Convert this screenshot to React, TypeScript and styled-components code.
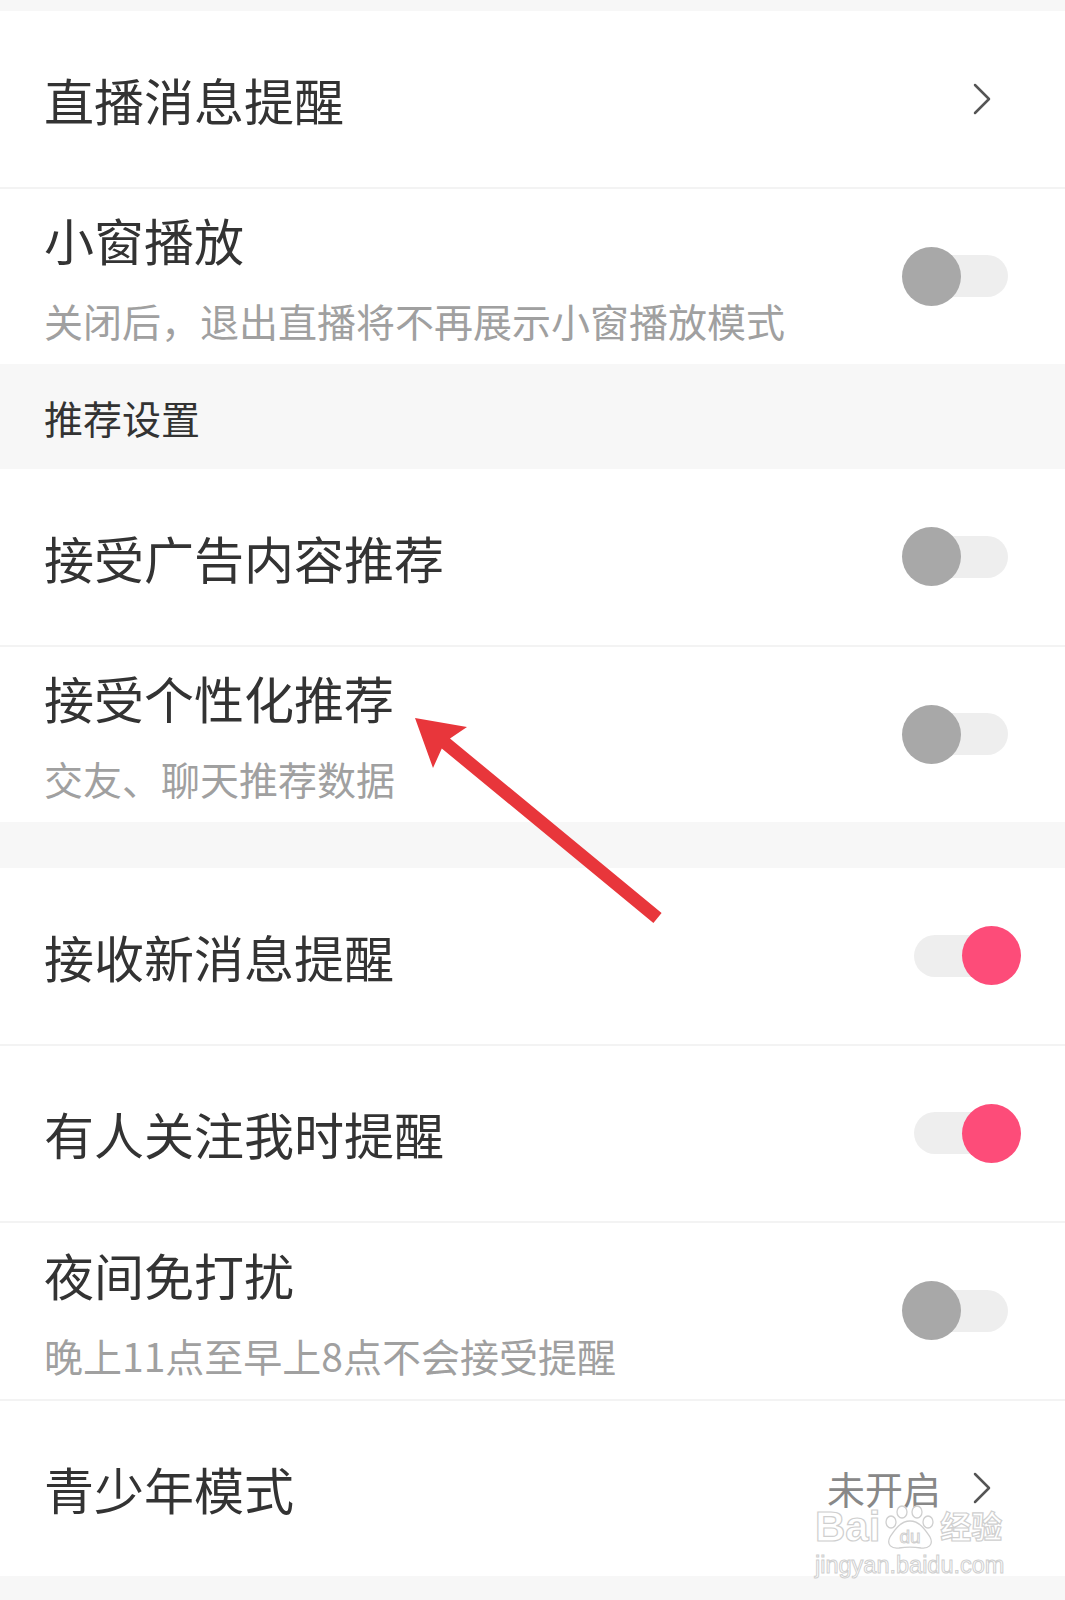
import React from 'react';
import styled, { createGlobalStyle } from 'styled-components';

const GlobalStyle = createGlobalStyle`
  html, body {
    margin: 0;
    padding: 0;
    background: #f7f7f7;
  }
  body {
    font-family: "Noto Sans CJK SC", "Noto Sans", sans-serif;
  }
`;

const Page = styled.div`
  position: relative;
  width: 1065px;
  height: 1600px;
  background: #f7f7f7;
  overflow: hidden;
`;

const Gap = styled.div<{ $h: number }>`
  height: ${(p) => p.$h}px;
`;

const Group = styled.div`
  background: #fff;
`;

const Row = styled.div`
  display: flex;
  align-items: center;
  justify-content: space-between;
  height: 175.5px;
  padding: 0 44px 0 44px;
  box-sizing: content-box;
  & + & {
    border-top: 2px solid #f3f3f3;
  }
`;

const TextBox = styled.div`
  display: flex;
  flex-direction: column;
  gap: 28px;
`;

const Title = styled.div`
  font-size: 50px;
  line-height: 60px;
  color: #333;
`;

const Sub = styled.div`
  font-size: 39px;
  line-height: 46px;
  color: #a0a0a0;
`;

const SectionHeader = styled.div`
  display: flex;
  align-items: center;
  height: 105px;
  padding-left: 44px;
  font-size: 39px;
  color: #333;
`;

const Right = styled.div`
  display: flex;
  align-items: center;
  margin-right: 30px;
`;

const Status = styled.span`
  font-size: 38px;
  line-height: 38px;
  color: #888;
  margin-right: 32px;
`;

const Switch = styled.div`
  position: relative;
  display: flex;
  align-items: center;
  width: 119px;
  height: 59px;
`;

const Track = styled.div`
  flex: 1;
  height: 42px;
  margin: 0 13px 0 12px;
  border-radius: 21px;
  background: #eeeeee;
`;

const Knob = styled.div<{ $on: boolean }>`
  position: absolute;
  top: 0;
  left: ${(p) => (p.$on ? 60 : 0)}px;
  width: 59px;
  height: 59px;
  border-radius: 50%;
  background: ${(p) => (p.$on ? '#fd4c79' : '#a8a8a8')};
`;

const ArrowLayer = styled.svg`
  position: absolute;
  left: 400px;
  top: 700px;
`;

const Watermark = styled.div`
  position: absolute;
  left: 815px;
  top: 1505px;
  display: flex;
  flex-direction: column;
  align-items: flex-start;
  pointer-events: none;
`;

const MarkLine = styled.div`
  display: flex;
  align-items: center;
  gap: 1px;
`;

const MarkText = styled.span<{ $size: number }>`
  font-family: "Liberation Sans", "Noto Sans CJK SC", sans-serif;
  font-weight: bold;
  font-size: ${(p) => p.$size}px;
  line-height: 1;
  color: #fff;
  -webkit-text-stroke: 1.2px #cfcfcf;
`;

const UrlText = styled.span`
  font-family: "Liberation Sans", sans-serif;
  font-size: 23.5px;
  line-height: 1;
  margin-top: 5px;
  color: #fff;
  -webkit-text-stroke: 1px #cfcfcf;
`;

const Chevron = () => (
  <svg width="18" height="32" viewBox="0 0 18 32">
    <polyline points="2,2 16,16 2,30" fill="none" stroke="#555" strokeWidth="2.5" strokeLinecap="round" strokeLinejoin="round" />
  </svg>
);

const Toggle = ({ on }: { on: boolean }) => (
  <Switch>
    <Track />
    <Knob $on={on} />
  </Switch>
);

const Paw = () => (
  <svg width="58" height="44" viewBox="0 0 58 44">
    <g fill="#fff" stroke="#cfcfcf" strokeWidth="1.3">
      <ellipse cx="10" cy="17" rx="5" ry="6" />
      <ellipse cx="21" cy="7" rx="5" ry="6" />
      <ellipse cx="36" cy="7" rx="5" ry="6" />
      <ellipse cx="47" cy="17" rx="5" ry="6" />
      <path d="M29 16 C19 16 13 26 9 32 C5 40 11 44 18 43 C24 42 34 42 40 43 C47 44 53 40 49 32 C45 26 39 16 29 16 Z" />
    </g>
    <text x="29" y="38" textAnchor="middle" fontFamily="Liberation Sans, sans-serif" fontSize="19" fill="#fff" stroke="#cfcfcf" strokeWidth="1">du</text>
  </svg>
);

export default function App() {
  return (
    <Page>
      <GlobalStyle />
      <Gap $h={11} />
      <Group>
        <Row>
          <Title>直播消息提醒</Title>
          <Right>
            <Chevron />
          </Right>
        </Row>
        <Row>
          <TextBox>
            <Title>小窗播放</Title>
            <Sub>关闭后，退出直播将不再展示小窗播放模式</Sub>
          </TextBox>
          <Toggle on={false} />
        </Row>
      </Group>
      <SectionHeader>推荐设置</SectionHeader>
      <Group>
        <Row>
          <Title>接受广告内容推荐</Title>
          <Toggle on={false} />
        </Row>
        <Row>
          <TextBox>
            <Title>接受个性化推荐</Title>
            <Sub>交友、聊天推荐数据</Sub>
          </TextBox>
          <Toggle on={false} />
        </Row>
      </Group>
      <Gap $h={46} />
      <Group>
        <Row>
          <Title>接收新消息提醒</Title>
          <Toggle on={true} />
        </Row>
        <Row>
          <Title>有人关注我时提醒</Title>
          <Toggle on={true} />
        </Row>
        <Row>
          <TextBox>
            <Title>夜间免打扰</Title>
            <Sub>晚上11点至早上8点不会接受提醒</Sub>
          </TextBox>
          <Toggle on={false} />
        </Row>
        <Row>
          <Title>青少年模式</Title>
          <Right>
            <Status>未开启</Status>
            <Chevron />
          </Right>
        </Row>
      </Group>

      <ArrowLayer width="280" height="240" viewBox="0 0 280 240">
        <polygon
          points="15,18 67,27 50,38.5 261.6,213 253.4,223 41.8,48.5 33,68"
          fill="#e8363b"
        />
      </ArrowLayer>

      <Watermark>
        <MarkLine>
          <MarkText $size={42}>Bai</MarkText>
          <Paw />
          <MarkText $size={31}>经验</MarkText>
        </MarkLine>
        <UrlText>jingyan.baidu.com</UrlText>
      </Watermark>
    </Page>
  );
}
